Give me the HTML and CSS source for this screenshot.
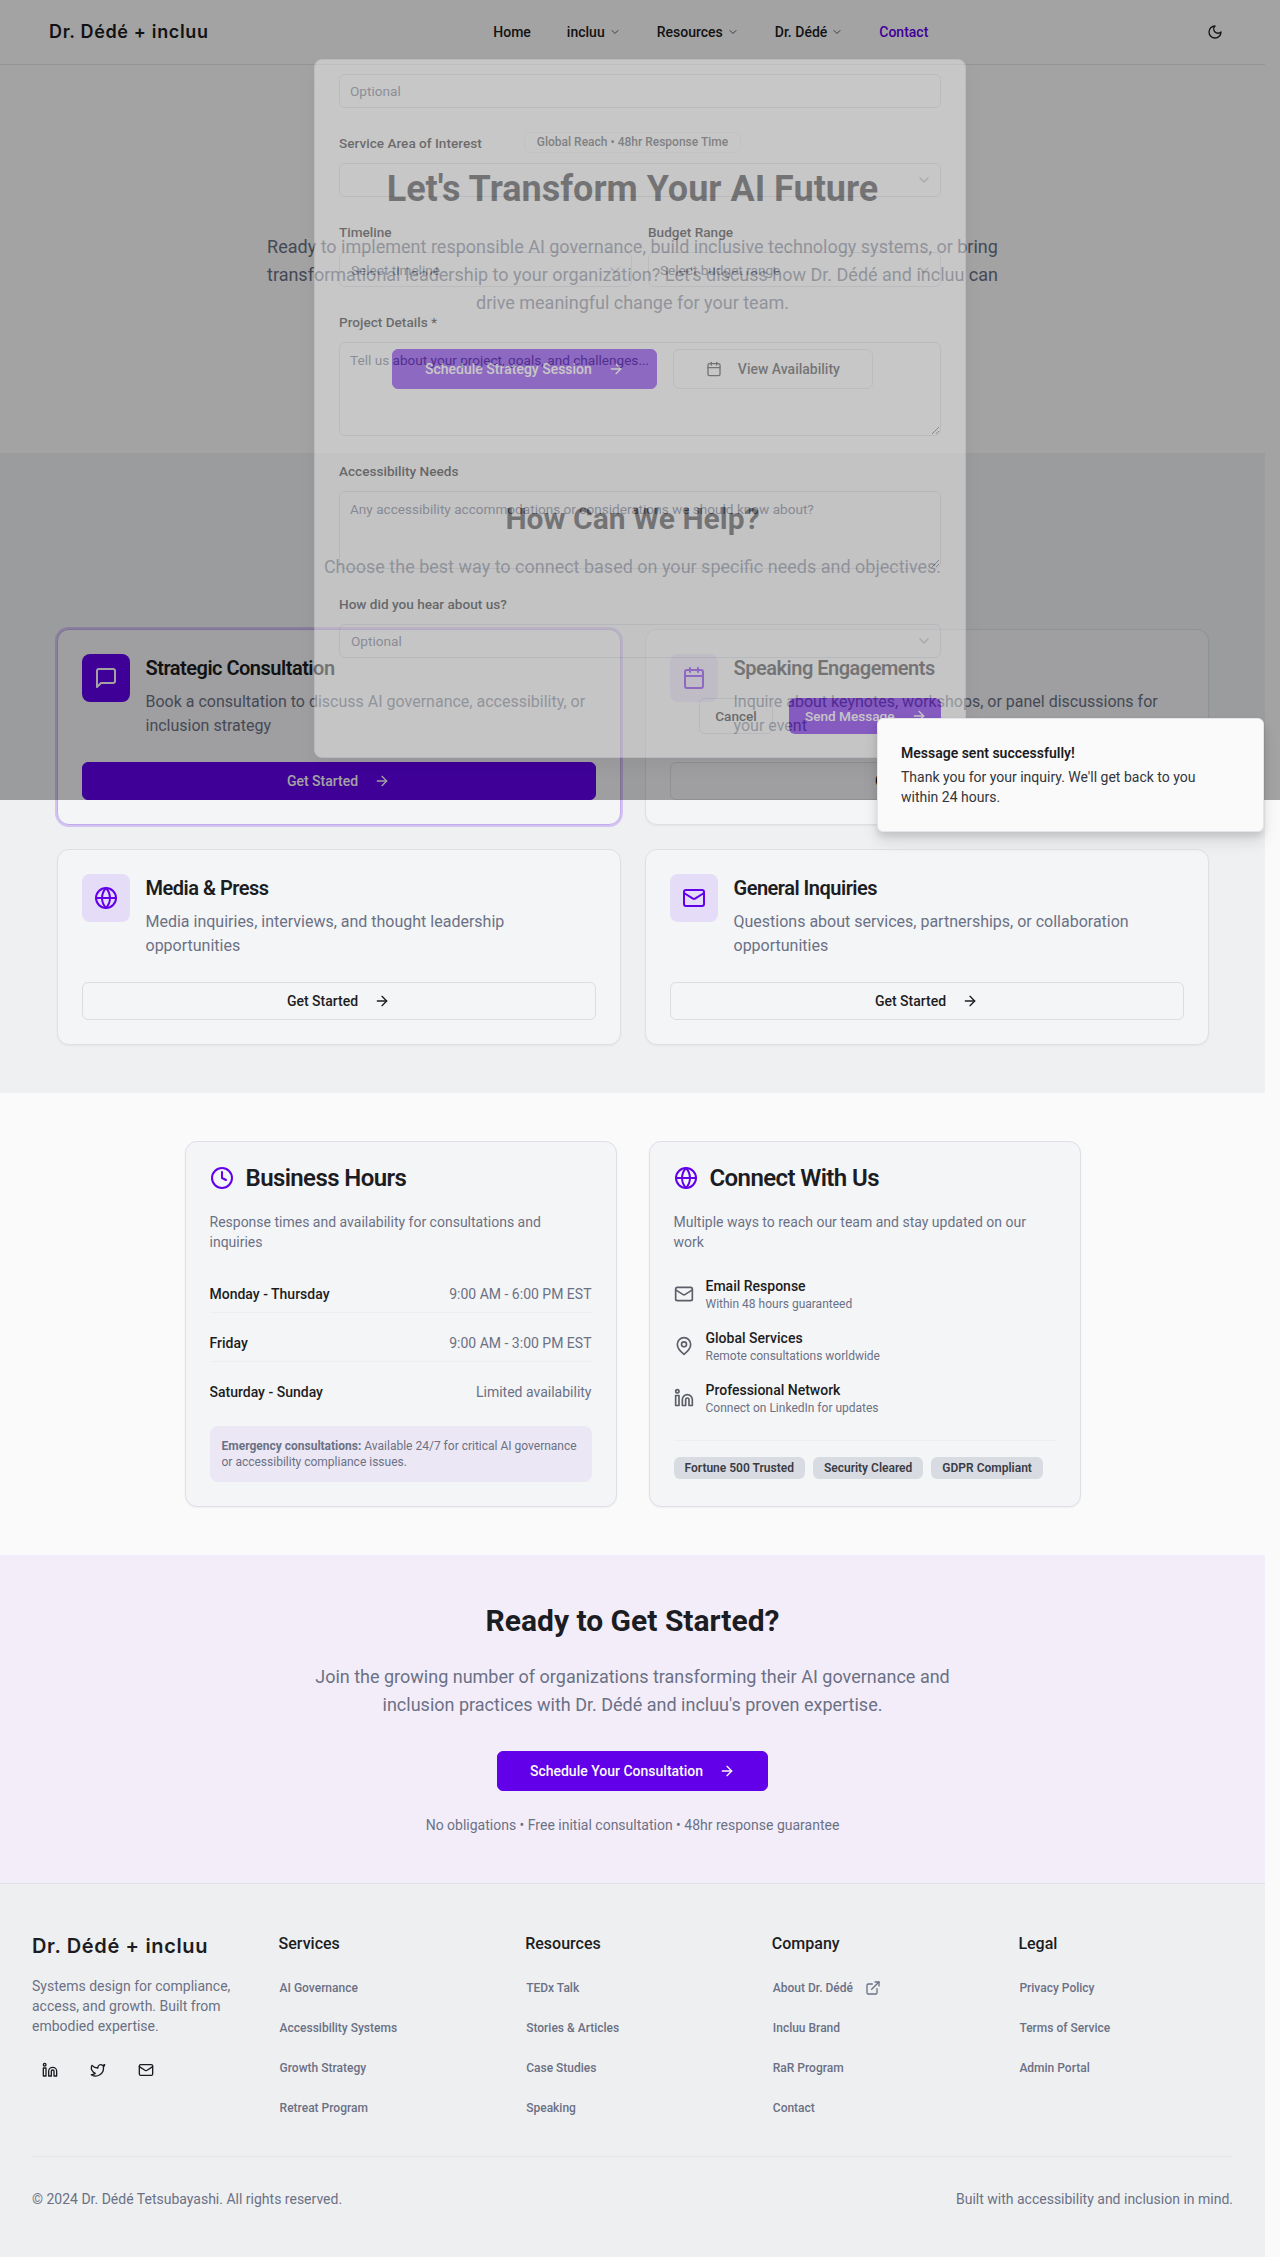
FILE: index.html
```html
<!DOCTYPE html>
<html lang="en">
<head>
    <meta charset="UTF-8">
    <meta name="viewport" content="width=device-width, initial-scale=1.0">
    <title>Contact - Dr. Dédé + incluu</title>
    <link rel="stylesheet" href="styles.css">
</head>
<body>

<svg class="sprite" aria-hidden="true">
    <symbol id="i-arrow" viewBox="0 0 24 24"><path d="M5 12h14"/><path d="m12 5 7 7-7 7"/></symbol>
    <symbol id="i-chevron" viewBox="0 0 24 24"><path d="m6 9 6 6 6-6"/></symbol>
    <symbol id="i-moon" viewBox="0 0 24 24"><path d="M12 3a6 6 0 0 0 9 9 9 9 0 1 1-9-9Z"/></symbol>
    <symbol id="i-calendar" viewBox="0 0 24 24"><rect x="3" y="4" width="18" height="18" rx="2"/><path d="M16 2v4"/><path d="M8 2v4"/><path d="M3 10h18"/></symbol>
    <symbol id="i-message" viewBox="0 0 24 24"><path d="M21 15a2 2 0 0 1-2 2H7l-4 4V5a2 2 0 0 1 2-2h14a2 2 0 0 1 2 2z"/></symbol>
    <symbol id="i-globe" viewBox="0 0 24 24"><circle cx="12" cy="12" r="10"/><path d="M2 12h20"/><path d="M12 2a15.3 15.3 0 0 1 4 10 15.3 15.3 0 0 1-4 10 15.3 15.3 0 0 1-4-10 15.3 15.3 0 0 1 4-10z"/></symbol>
    <symbol id="i-mail" viewBox="0 0 24 24"><rect x="2" y="4" width="20" height="16" rx="2"/><path d="m22 7-8.97 5.7a1.94 1.94 0 0 1-2.06 0L2 7"/></symbol>
    <symbol id="i-clock" viewBox="0 0 24 24"><circle cx="12" cy="12" r="10"/><path d="M12 6v6l4 2"/></symbol>
    <symbol id="i-pin" viewBox="0 0 24 24"><path d="M20 10c0 6-8 12-8 12s-8-6-8-12a8 8 0 0 1 16 0Z"/><circle cx="12" cy="10" r="3"/></symbol>
    <symbol id="i-linkedin" viewBox="0 0 24 24"><path d="M16 8a6 6 0 0 1 6 6v7h-4v-7a2 2 0 0 0-2-2 2 2 0 0 0-2 2v7h-4v-7a6 6 0 0 1 6-6z"/><rect x="2" y="9" width="4" height="12"/><circle cx="4" cy="4" r="2"/></symbol>
    <symbol id="i-twitter" viewBox="0 0 24 24"><path d="M22 4s-.7 2.1-2 3.4c1.6 10-9.4 17.3-18 11.6 2.2.1 4.4-.6 6-2C3 15.5.5 9.6 3 5c2.2 2.6 5.6 4.1 9 4-.9-4.2 4-6.6 7-3.8 1.1 0 3-1.2 3-1.2z"/></symbol>
    <symbol id="i-external" viewBox="0 0 24 24"><path d="M18 13v6a2 2 0 0 1-2 2H5a2 2 0 0 1-2-2V8a2 2 0 0 1 2-2h6"/><path d="M15 3h6v6"/><path d="M10 14 21 3"/></symbol>
</svg>

<div class="page">
    <header class="site-header">
        <a class="logo" href="#">Dr. Dédé + incluu</a>
        <nav class="main-nav">
            <a href="#">Home</a>
            <a href="#">incluu <svg class="icon icon-12"><use href="#i-chevron"/></svg></a>
            <a href="#">Resources <svg class="icon icon-12"><use href="#i-chevron"/></svg></a>
            <a href="#">Dr. Dédé <svg class="icon icon-12"><use href="#i-chevron"/></svg></a>
            <a class="active" href="#">Contact</a>
        </nav>
        <button class="theme-btn" type="button"><svg class="icon icon-16"><use href="#i-moon"/></svg></button>
    </header>

    <section class="hero">
        <span class="hero-badge">Global Reach • 48hr Response Time</span>
        <h1>Let's Transform Your AI Future</h1>
        <p>Ready to implement responsible AI governance, build inclusive technology systems, or bring transformational leadership to your organization? Let's discuss how Dr. Dédé and incluu can drive meaningful change for your team.</p>
        <div class="hero-actions">
            <a class="btn btn-primary btn-wide" href="#">Schedule Strategy Session <svg class="icon icon-16"><use href="#i-arrow"/></svg></a>
            <a class="btn btn-outline btn-wide" href="#"><svg class="icon icon-16"><use href="#i-calendar"/></svg> View Availability</a>
        </div>
    </section>

    <section class="help">
        <h2>How Can We Help?</h2>
        <p class="help-sub">Choose the best way to connect based on your specific needs and objectives.</p>
        <div class="help-grid">
            <article class="help-card selected">
                <div class="help-head">
                    <div class="help-icon"><svg class="icon icon-24"><use href="#i-message"/></svg></div>
                    <div>
                        <h3>Strategic Consultation</h3>
                        <p>Book a consultation to discuss AI governance, accessibility, or inclusion strategy</p>
                    </div>
                </div>
                <a class="btn btn-primary btn-full" href="#">Get Started <svg class="icon icon-16"><use href="#i-arrow"/></svg></a>
            </article>
            <article class="help-card">
                <div class="help-head">
                    <div class="help-icon"><svg class="icon icon-24"><use href="#i-calendar"/></svg></div>
                    <div>
                        <h3>Speaking Engagements</h3>
                        <p>Inquire about keynotes, workshops, or panel discussions for your event</p>
                    </div>
                </div>
                <a class="btn btn-outline btn-full" href="#">Get Started <svg class="icon icon-16"><use href="#i-arrow"/></svg></a>
            </article>
            <article class="help-card">
                <div class="help-head">
                    <div class="help-icon"><svg class="icon icon-24"><use href="#i-globe"/></svg></div>
                    <div>
                        <h3>Media &amp; Press</h3>
                        <p>Media inquiries, interviews, and thought leadership opportunities</p>
                    </div>
                </div>
                <a class="btn btn-outline btn-full" href="#">Get Started <svg class="icon icon-16"><use href="#i-arrow"/></svg></a>
            </article>
            <article class="help-card">
                <div class="help-head">
                    <div class="help-icon"><svg class="icon icon-24"><use href="#i-mail"/></svg></div>
                    <div>
                        <h3>General Inquiries</h3>
                        <p>Questions about services, partnerships, or collaboration opportunities</p>
                    </div>
                </div>
                <a class="btn btn-outline btn-full" href="#">Get Started <svg class="icon icon-16"><use href="#i-arrow"/></svg></a>
            </article>
        </div>
    </section>

    <section class="info">
        <div class="info-grid">
            <article class="info-card">
                <h3 class="info-title"><svg class="icon icon-24"><use href="#i-clock"/></svg> Business Hours</h3>
                <p class="info-desc">Response times and availability for consultations and inquiries</p>
                <ul class="hours">
                    <li><strong>Monday - Thursday</strong><span>9:00 AM - 6:00 PM EST</span></li>
                    <li><strong>Friday</strong><span>9:00 AM - 3:00 PM EST</span></li>
                    <li><strong>Saturday - Sunday</strong><span>Limited availability</span></li>
                </ul>
                <p class="emergency"><strong>Emergency consultations:</strong> Available 24/7 for critical AI governance or accessibility compliance issues.</p>
            </article>
            <article class="info-card">
                <h3 class="info-title"><svg class="icon icon-24"><use href="#i-globe"/></svg> Connect With Us</h3>
                <p class="info-desc">Multiple ways to reach our team and stay updated on our work</p>
                <ul class="connect">
                    <li>
                        <svg class="icon icon-20"><use href="#i-mail"/></svg>
                        <div><strong>Email Response</strong><span>Within 48 hours guaranteed</span></div>
                    </li>
                    <li>
                        <svg class="icon icon-20"><use href="#i-pin"/></svg>
                        <div><strong>Global Services</strong><span>Remote consultations worldwide</span></div>
                    </li>
                    <li>
                        <svg class="icon icon-20"><use href="#i-linkedin"/></svg>
                        <div><strong>Professional Network</strong><span>Connect on LinkedIn for updates</span></div>
                    </li>
                </ul>
                <div class="trust">
                    <span>Fortune 500 Trusted</span>
                    <span>Security Cleared</span>
                    <span>GDPR Compliant</span>
                </div>
            </article>
        </div>
    </section>

    <section class="cta">
        <h2>Ready to Get Started?</h2>
        <p>Join the growing number of organizations transforming their AI governance and inclusion practices with Dr. Dédé and incluu's proven expertise.</p>
        <a class="btn btn-primary btn-wide" href="#">Schedule Your Consultation <svg class="icon icon-16"><use href="#i-arrow"/></svg></a>
        <small>No obligations • Free initial consultation • 48hr response guarantee</small>
    </section>

    <footer class="site-footer">
        <div class="footer-grid">
            <div>
                <a class="footer-logo" href="#">Dr. Dédé + incluu</a>
                <p class="footer-tag">Systems design for compliance, access, and growth. Built from embodied expertise.</p>
                <div class="social">
                    <a href="#"><svg class="icon icon-16"><use href="#i-linkedin"/></svg></a>
                    <a href="#"><svg class="icon icon-16"><use href="#i-twitter"/></svg></a>
                    <a href="#"><svg class="icon icon-16"><use href="#i-mail"/></svg></a>
                </div>
            </div>
            <div class="footer-col">
                <h4>Services</h4>
                <a href="#">AI Governance</a>
                <a href="#">Accessibility Systems</a>
                <a href="#">Growth Strategy</a>
                <a href="#">Retreat Program</a>
            </div>
            <div class="footer-col">
                <h4>Resources</h4>
                <a href="#">TEDx Talk</a>
                <a href="#">Stories &amp; Articles</a>
                <a href="#">Case Studies</a>
                <a href="#">Speaking</a>
            </div>
            <div class="footer-col">
                <h4>Company</h4>
                <a href="#">About Dr. Dédé <svg class="icon icon-16"><use href="#i-external"/></svg></a>
                <a href="#">Incluu Brand</a>
                <a href="#">RaR Program</a>
                <a href="#">Contact</a>
            </div>
            <div class="footer-col">
                <h4>Legal</h4>
                <a href="#">Privacy Policy</a>
                <a href="#">Terms of Service</a>
                <a href="#">Admin Portal</a>
            </div>
        </div>
        <div class="footer-bottom">
            <span>© 2024 Dr. Dédé Tetsubayashi. All rights reserved.</span>
            <span>Built with accessibility and inclusion in mind.</span>
        </div>
    </footer>
</div>

<div class="overlay">
    <form class="modal">
        <input type="text" placeholder="Optional">
        <div class="field">
            <label>Service Area of Interest</label>
            <div class="select"><span></span><svg class="icon icon-16"><use href="#i-chevron"/></svg></div>
        </div>
        <div class="field-row">
            <div class="field">
                <label>Timeline</label>
                <div class="select tall"><span>Select timeline</span><svg class="icon icon-16"><use href="#i-chevron"/></svg></div>
            </div>
            <div class="field">
                <label>Budget Range</label>
                <div class="select tall"><span>Select budget range</span><svg class="icon icon-16"><use href="#i-chevron"/></svg></div>
            </div>
        </div>
        <div class="field">
            <label>Project Details *</label>
            <textarea class="area-details" placeholder="Tell us about your project, goals, and challenges..."></textarea>
        </div>
        <div class="field">
            <label>Accessibility Needs</label>
            <textarea class="area-access" placeholder="Any accessibility accommodations or considerations we should know about?"></textarea>
        </div>
        <div class="field">
            <label>How did you hear about us?</label>
            <div class="select"><span>Optional</span><svg class="icon icon-16"><use href="#i-chevron"/></svg></div>
        </div>
        <div class="modal-actions">
            <button class="modal-cancel" type="button">Cancel</button>
            <button class="modal-send" type="button">Send Message <svg class="icon icon-16"><use href="#i-arrow"/></svg></button>
        </div>
    </form>
</div>

<div class="toast">
    <strong>Message sent successfully!</strong>
    <p>Thank you for your inquiry. We'll get back to you within 24 hours.</p>
</div>

</body>
</html>
```

FILE: styles.css
```css
* {
    box-sizing: border-box;
}
body {
    margin: 0;
    position: relative;
    background-color: #fafafa;
    color: #1c1d22;
    font-family: Roboto, "Liberation Sans", sans-serif;
    font-size: 14px;
    line-height: 20px;
}
a {
    color: inherit;
    text-decoration: none;
}
h1, h2, h3, h4, p, ul {
    margin: 0;
    padding: 0;
}
ul {
    list-style: none;
}
.sprite {
    display: none;
}
.icon {
    flex: none;
    fill: none;
    stroke: currentColor;
    stroke-width: 2;
    stroke-linecap: round;
    stroke-linejoin: round;
}
.icon-12 { width: 12px; height: 12px; }
.icon-16 { width: 16px; height: 16px; }
.icon-20 { width: 20px; height: 20px; }
.icon-24 { width: 24px; height: 24px; }

.page {
    width: 1265px;
}

/* header */
.site-header {
    display: flex;
    align-items: center;
    justify-content: space-between;
    height: 65px;
    padding: 0 32px;
    background-color: #fafafa;
    border-bottom: 1px solid #e4e5ea;
}
.logo {
    padding: 0 16px 0 17px;
    font-family: Inter, sans-serif;
    font-size: 18px;
    font-weight: 600;
    line-height: 28px;
    letter-spacing: 0.65px;
}
.main-nav {
    display: flex;
    gap: 36px;
    font-weight: 500;
}
.main-nav a {
    display: flex;
    align-items: center;
    gap: 4px;
}
.main-nav .icon {
    color: #5c5f69;
}
.main-nav .active {
    color: #6200ea;
}
.theme-btn {
    display: flex;
    align-items: center;
    justify-content: center;
    width: 36px;
    height: 36px;
    padding: 0;
    border: 0;
    background: none;
    color: inherit;
}

/* buttons */
.btn {
    display: inline-flex;
    align-items: center;
    justify-content: center;
    gap: 16px;
    height: 38px;
    font-weight: 500;
    border-radius: 6px;
}
.btn-wide {
    height: 40px;
    padding: 0 32px;
}
.btn-full {
    width: 100%;
}
.btn-primary {
    background-color: #6200ea;
    border: 1px solid #6200ea;
    color: #fafafa;
}
.btn-outline {
    border: 1px solid #dcdde3;
}

/* hero */
.hero {
    display: flex;
    flex-direction: column;
    align-items: center;
    height: 388px;
    padding-top: 67px;
    text-align: center;
}
.hero-badge {
    height: 21px;
    padding: 0 12px;
    border: 1px solid #eceef0;
    border-radius: 6px;
    font-size: 12px;
    font-weight: 500;
    line-height: 19px;
    color: #3a3d45;
}
.hero h1 {
    margin-top: 16px;
    font-size: 36px;
    font-weight: 700;
    line-height: 40px;
}
.hero p {
    width: 768px;
    margin-top: 24px;
    font-size: 18px;
    line-height: 28px;
    color: #6b7185;
}
.hero-actions {
    display: flex;
    gap: 16px;
    margin-top: 32px;
}

/* how can we help */
.help {
    padding: 48px 56.5px;
    background-color: #eff0f2;
    text-align: center;
}
.help h2 {
    font-size: 30px;
    font-weight: 700;
    line-height: 36px;
}
.help-sub {
    margin-top: 16px;
    font-size: 18px;
    line-height: 28px;
    color: #6b7185;
}
.help-grid {
    display: grid;
    grid-template-columns: 1fr 1fr;
    gap: 24px;
    margin-top: 48px;
    text-align: left;
}
.help-card {
    padding: 24px;
    background-color: #f4f5f7;
    border: 1px solid #dfe0e5;
    border-radius: 12px;
    box-shadow: 0 1px 2px rgba(0, 0, 0, 0.05);
}
.help-card.selected {
    border-color: #c4acec;
    box-shadow: 0 0 0 2px #d3c3f1;
}
.help-head {
    display: flex;
    gap: 16px;
    margin-bottom: 24px;
}
.help-icon {
    display: flex;
    flex: none;
    align-items: center;
    justify-content: center;
    width: 48px;
    height: 48px;
    border-radius: 8px;
    background-color: #e5dcf7;
    color: #6200ea;
}
.selected .help-icon {
    background-color: #6200ea;
    color: #fafafa;
}
.help-head h3 {
    margin-bottom: 8px;
    font-size: 20px;
    font-weight: 600;
    line-height: 28px;
    letter-spacing: -0.5px;
}
.help-head p {
    font-size: 16px;
    line-height: 24px;
    color: #6b7185;
}

/* hours + connect */
.info {
    padding: 48px 0;
}
.info-grid {
    display: grid;
    grid-template-columns: 1fr 1fr;
    gap: 32px;
    width: 896px;
    margin: 0 auto;
}
.info-card {
    padding: 24px;
    background-color: #f4f5f7;
    border: 1px solid #dfe0e5;
    border-radius: 12px;
    box-shadow: 0 1px 2px rgba(0, 0, 0, 0.05);
}
.info-title {
    display: flex;
    align-items: center;
    gap: 12px;
    font-size: 24px;
    font-weight: 600;
    line-height: 24px;
    letter-spacing: -0.6px;
}
.info-title .icon {
    color: #6200ea;
}
.info-desc {
    margin-top: 22px;
    color: #6b7185;
}
.hours {
    margin-top: 32px;
}
.hours li {
    display: flex;
    justify-content: space-between;
    margin-bottom: 20px;
    padding-bottom: 8px;
    border-bottom: 1px solid #eceef0;
}
.hours li:last-child {
    margin-bottom: 0;
    padding-bottom: 0;
    border-bottom: 0;
}
.hours strong {
    font-weight: 500;
}
.hours span {
    color: #6b7185;
}
.emergency {
    margin-top: 24px;
    padding: 12px;
    border-radius: 8px;
    background-color: #ece7f4;
    color: #6b7185;
    font-size: 12px;
    line-height: 16px;
}
.emergency strong {
    font-weight: 700;
}
.connect {
    display: flex;
    flex-direction: column;
    gap: 16px;
    margin-top: 24px;
}
.connect li {
    display: flex;
    align-items: center;
    gap: 12px;
}
.connect .icon {
    color: #5c5f69;
}
.connect strong {
    display: block;
    font-weight: 500;
}
.connect span {
    display: block;
    font-size: 12px;
    line-height: 16px;
    color: #6b7185;
}
.trust {
    display: flex;
    gap: 8px;
    margin-top: 24px;
    padding-top: 16px;
    border-top: 1px solid #eceef0;
}
.trust span {
    height: 22px;
    padding: 0 11px;
    border-radius: 6px;
    background-color: #d9dbe2;
    color: #3a3d45;
    font-size: 12px;
    font-weight: 600;
    line-height: 22px;
}

/* cta */
.cta {
    display: flex;
    flex-direction: column;
    align-items: center;
    padding: 48px 0;
    background-color: #f3edf9;
    text-align: center;
}
.cta h2 {
    font-size: 30px;
    font-weight: 700;
    line-height: 36px;
}
.cta p {
    width: 672px;
    margin: 24px 0 32px;
    font-size: 18px;
    line-height: 28px;
    color: #6b7185;
}
.cta small {
    margin-top: 24px;
    font-size: 14px;
    line-height: 20px;
    color: #6b7185;
}

/* footer */
.site-footer {
    padding: 48px 32px;
    background-color: #eeeff1;
    border-top: 1px solid #e0e1e6;
}
.footer-grid {
    display: grid;
    grid-template-columns: repeat(5, 1fr);
    gap: 32px;
}
.footer-logo {
    display: block;
    font-family: Inter, sans-serif;
    font-size: 20px;
    font-weight: 600;
    line-height: 28px;
    letter-spacing: 0.65px;
}
.footer-tag {
    margin-top: 16px;
    color: #6b7185;
}
.social {
    display: flex;
    gap: 12px;
    margin-top: 16px;
}
.social a {
    display: flex;
    align-items: center;
    justify-content: center;
    width: 36px;
    height: 36px;
}
.footer-col {
    display: flex;
    flex-direction: column;
    align-items: flex-start;
    gap: 4px;
}
.footer-col h4 {
    margin-bottom: 10px;
    font-size: 16px;
    font-weight: 500;
    line-height: 24px;
}
.footer-col a {
    display: flex;
    align-items: center;
    gap: 12px;
    height: 36px;
    padding-left: 1px;
    font-size: 12px;
    font-weight: 500;
    color: #6b7185;
}
.footer-bottom {
    display: flex;
    justify-content: space-between;
    margin-top: 30px;
    padding-top: 32px;
    border-top: 1px solid #e4e5ea;
    color: #6b7185;
}

/* dialog, caught mid fade-in */
.overlay {
    position: absolute;
    top: 0;
    left: 0;
    display: flex;
    justify-content: center;
    width: 1280px;
    height: 800px;
    padding-top: 59px;
    background-color: rgba(0, 0, 0, 0.35);
}
.modal {
    width: 652px;
    height: 699px;
    padding: 14px 24px 0;
    background-color: #fafafa;
    border: 1px solid #dcdde3;
    border-radius: 8px;
    box-shadow: 0 10px 15px rgba(0, 0, 0, 0.1);
    opacity: 0.42;
    overflow: hidden;
    font-size: 13.6px;
}
.modal input,
.modal textarea {
    display: block;
    width: 100%;
    height: 34px;
    padding: 7px 10px;
    background: none;
    border: 1px solid #dcdde3;
    border-radius: 6px;
    font: inherit;
}
.modal ::placeholder {
    color: #6b7185;
    opacity: 1;
}
.modal .area-details {
    height: 94px;
}
.modal .area-access {
    height: 78px;
}
.field {
    margin-top: 25px;
}
.field label {
    display: block;
    margin-bottom: 10px;
    font-weight: 500;
}
.field-row {
    display: grid;
    grid-template-columns: 1fr 1fr;
    gap: 16px;
}
.select {
    display: flex;
    align-items: center;
    justify-content: space-between;
    height: 34px;
    padding: 0 8px 0 11px;
    border: 1px solid #dcdde3;
    border-radius: 6px;
    color: #6b7185;
}
.select.tall {
    height: 35px;
}
.select .icon {
    opacity: 0.5;
}
.modal-actions {
    display: flex;
    justify-content: flex-end;
    gap: 16px;
    margin-top: 40px;
}
.modal-actions button {
    display: flex;
    align-items: center;
    height: 36px;
    border-radius: 6px;
    font: inherit;
    font-weight: 500;
    white-space: nowrap;
}
.modal-actions .modal-cancel {
    justify-content: center;
    width: 74px;
    background: none;
    border: 1px solid #dcdde3;
    color: inherit;
}
.modal-actions .modal-send {
    gap: 16px;
    width: 152px;
    padding: 0 16px;
    background-color: #6200ea;
    border: 0;
    color: #fafafa;
}

/* toast */
.toast {
    position: absolute;
    top: 718px;
    left: 877px;
    width: 387px;
    padding: 24px 24px 24px 23px;
    background-color: #fafafa;
    border: 1px solid #e4e5ea;
    border-radius: 6px;
    box-shadow: 0 10px 15px rgba(0, 0, 0, 0.1), 0 4px 6px rgba(0, 0, 0, 0.1);
}
.toast strong {
    display: block;
    margin-bottom: 4px;
    font-weight: 600;
}
.toast p {
    max-width: 310px;
    color: #33353c;
}
```
